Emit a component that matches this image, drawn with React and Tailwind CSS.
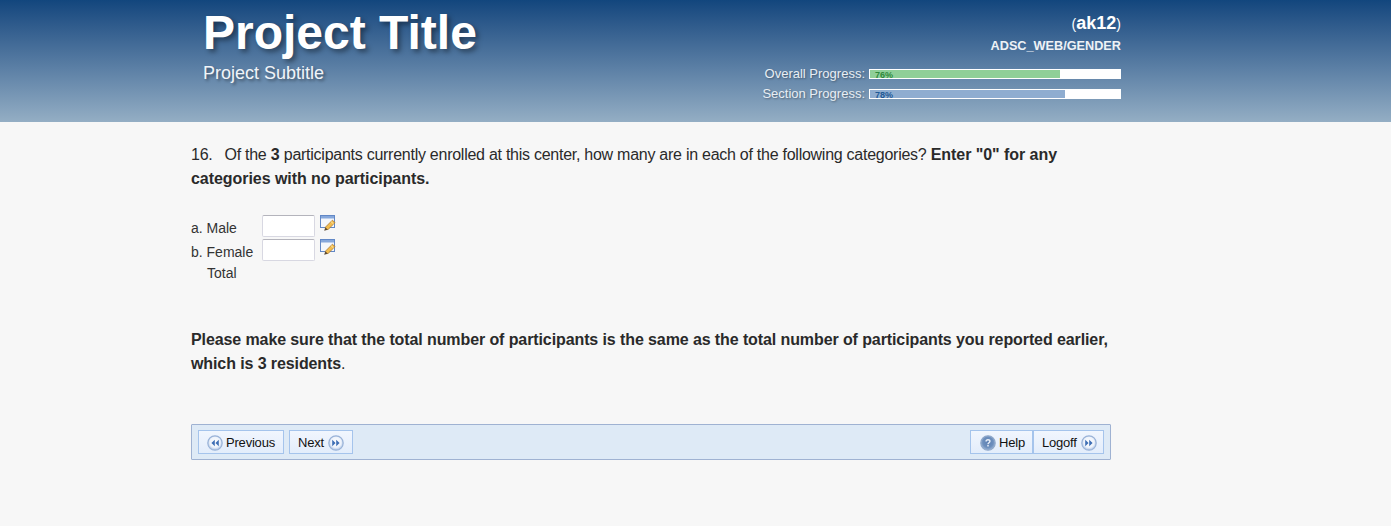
import React from 'react';

const sans = "font-['Liberation_Sans',Arial,sans-serif]";

const ProgressRow = ({ label, value, fill, textColor }) => (
  <div className="flex items-center justify-end h-[11px]">
    <span className="text-[13px] leading-none text-[#e8eef4] mr-[4px] [text-shadow:1px_1px_2px_rgba(0,0,0,0.35)]">{label}</span>
    <div className="relative w-[252px] h-[10px] bg-white border border-white">
      <div className={`h-full ${fill}`} style={{ width: `${value === 76 ? 75.8 : 77.8}%` }} />
      <span className={`absolute left-[5px] top-0 text-[9px] leading-[10px] font-bold ${textColor}`}>{value}%</span>
    </div>
  </div>
);

const CircleIcon = ({ type }) => (
  <svg width="16" height="16" viewBox="0 0 16 16" className="shrink-0">
    <defs>
      <radialGradient id={`g-${type}`} cx="50%" cy="45%" r="55%">
        <stop offset="0%" stopColor={type === 'help' ? '#5f82b4' : '#ffffff'} />
        <stop offset="65%" stopColor={type === 'help' ? '#6d8fbd' : '#eef3fb'} />
        <stop offset="100%" stopColor={type === 'help' ? '#9db5d6' : '#a9c0e2'} />
      </radialGradient>
    </defs>
    <circle cx="8" cy="8" r="7.2" fill={`url(#g-${type})`} stroke={type === 'help' ? '#8ea7c9' : '#9ab3d8'} strokeWidth="1.2" />
    {type === 'prev' && <path d="M7.8 4.8v6.4L4.4 8zM11.8 4.8v6.4L8.4 8z" fill="#3f6fb5" />}
    {type === 'next' && <path d="M4.2 4.8v6.4L7.6 8zM8.2 4.8v6.4L11.6 8z" fill="#3f6fb5" />}
    {type === 'help' && (
      <path d="M6.1 6.5C6.1 5.4 6.9 4.7 8 4.7s1.9.7 1.9 1.6c0 1.4-1.9 1.5-1.9 3M8 10.1v1.3" fill="none" stroke="#e8eef7" strokeWidth="1.5" />
    )}
  </svg>
);

const NoteIcon = () => (
  <svg width="16" height="16" viewBox="0 0 16 16" className="shrink-0 overflow-visible">
    <rect x="0.5" y="0.5" width="14" height="12" fill="#f4f7fc" stroke="#6288c6" />
    <rect x="1" y="1" width="13" height="2.5" fill="#86a8dc" />
    <path d="M5.2 12.4 L12.4 5.2 L15 7.6 L7.8 14.8 Z" fill="#f3bd4e" stroke="#a8752a" strokeWidth="0.8" />
    <path d="M11 6.6 L13.6 9" stroke="#fbe7a8" strokeWidth="1" />
    <path d="M5.2 12.4 L4.2 15.8 L7.8 14.8 Z" fill="#5b4a32" />
  </svg>
);

const NavButton = ({ children, className = '' }) => (
  <button
    type="button"
    className={`flex items-center h-[24px] pt-[2px] border border-[#a5c4ec] bg-gradient-to-b from-[#f1f6fe] to-[#e3edfb] text-[13px] tracking-[-0.2px] text-[#111] ${className}`}
  >
    {children}
  </button>
);

const App = () => {
  return (
    <div className={`min-h-[526px] bg-[#f7f7f7] text-[#222] ${sans}`}>
      {/* Header */}
      <div className="h-[122px] bg-gradient-to-b from-[#12467d] to-[#94aec4]">
        <div className="w-[930px] ml-[191px] flex justify-between">
          <div className="pl-[12px] pt-[6px] text-white">
            <h1 className="text-[48px] leading-[54px] font-bold [text-shadow:3px_3px_5px_rgba(0,0,0,0.4)]">Project Title</h1>
            <p className="text-[18px] leading-[19px] mt-[4px] text-[#f0f4f8] [text-shadow:2px_2px_3px_rgba(0,0,0,0.4)]">Project Subtitle</p>
          </div>
          <div className="pt-[13px] text-right">
            <div className="text-[14px] leading-[20px] text-white">
              (<span className="text-[18px] font-bold">ak12</span>)
            </div>
            <div className="text-[12.7px] leading-[14px] font-bold text-[#eef2f6] mt-[5px]">ADSC_WEB/GENDER</div>
            <div className="mt-[15px] flex flex-col gap-[9px]">
              <ProgressRow label="Overall Progress:" value={76} fill="bg-[#8fcf98]" textColor="text-[#2f8a3c]" />
              <ProgressRow label="Section Progress:" value={78} fill="bg-[#8fadd0]" textColor="text-[#1f5a96]" />
            </div>
          </div>
        </div>
      </div>

      {/* Question */}
      <div className="w-[920px] ml-[191px]">
        <p className="pt-[21px] text-[16px] leading-[24px] tracking-[-0.26px] text-[#2a2a2a]">
          16.<span className="inline-block w-[12px]" />Of the <b className="tracking-normal">3</b> participants currently enrolled at this center, how many are in each of the following categories? <b className="tracking-[-0.05px]">Enter "0" for any</b>
          <br />
          <b className="tracking-[-0.05px]">categories with no participants.</b>
        </p>

        <div className="mt-[24px] text-[14px] text-[#333]">
          <div className="flex h-[24px]">
            <span className="w-[71px] pt-[5px] leading-[16px]">a. Male</span>
            <input className="w-[53px] h-[22px] bg-white border border-[#d8d8e2] border-t-[#b4b4bc] rounded-[2px]" />
            <span className="ml-[5px]"><NoteIcon /></span>
          </div>
          <div className="flex h-[24px]">
            <span className="w-[71px] pt-[5px] leading-[16px]">b. Female</span>
            <input className="w-[53px] h-[22px] bg-white border border-[#d8d8e2] border-t-[#b4b4bc] rounded-[2px]" />
            <span className="ml-[5px]"><NoteIcon /></span>
          </div>
          <div className="pl-[16px] leading-[18px] pt-[1px]">Total</div>
        </div>

        <p className="mt-[46px] text-[16px] leading-[24px] tracking-[-0.1px] font-bold text-[#2a2a2a]">
          Please make sure that the total number of participants is the same as the total number of participants you reported earlier,
          <br />
          which is 3 residents<span className="font-normal">.</span>
        </p>

        {/* Nav bar */}
        <div className="mt-[48px] h-[36px] bg-[#deeaf6] border border-[#9fb2d2] rounded-[1px] flex items-center justify-between px-[6px]">
          <div className="flex gap-[5px]">
            <NavButton className="w-[86px] pl-[8px] gap-[3px]"><CircleIcon type="prev" />Previous</NavButton>
            <NavButton className="w-[64px] pl-[8px] gap-[4px]">Next<CircleIcon type="next" /></NavButton>
          </div>
          <div className="flex">
            <NavButton className="w-[63px] pl-[9px] gap-[3px]"><CircleIcon type="help" />Help</NavButton>
            <NavButton className="w-[71px] pl-[8px] gap-[4px]">Logoff<CircleIcon type="next" /></NavButton>
          </div>
        </div>
      </div>
    </div>
  );
};

export default App;
